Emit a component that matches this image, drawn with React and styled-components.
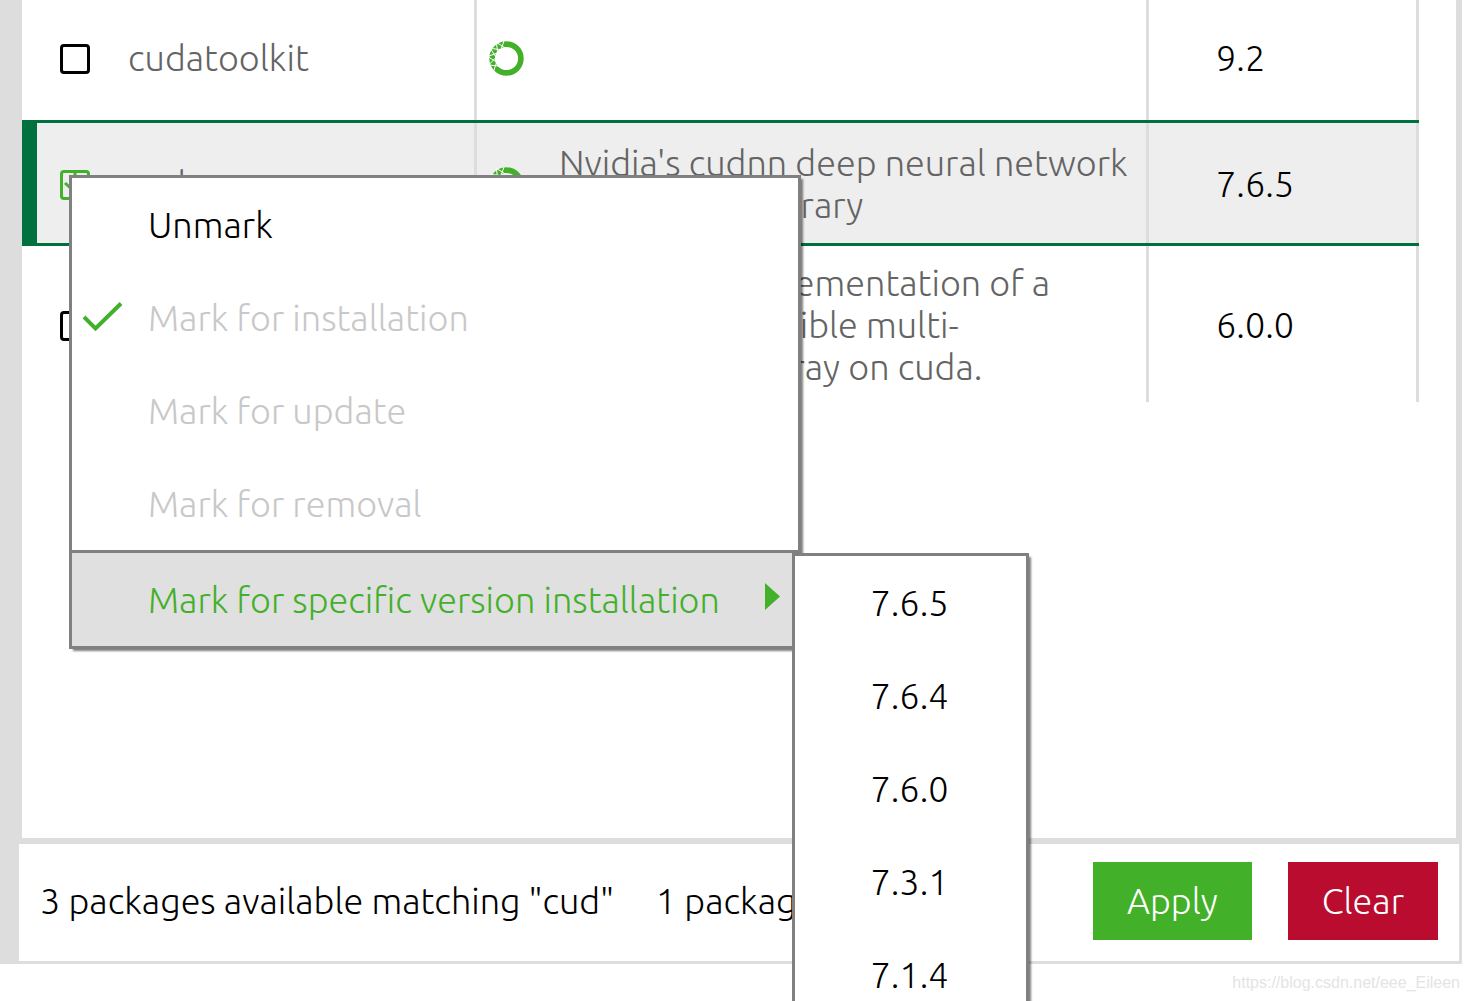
import React from "react";
import styled, { createGlobalStyle, css } from "styled-components";

const green = "#43b02a";
const darkGreen = "#00703f";
const line = "#dddddd";
const frame = "#808080";

const GlobalStyle = createGlobalStyle`
  * { box-sizing: border-box; }
  body {
    margin: 0;
    background: #ffffff;
    color: #000000;
    font-family: Ubuntu, "Open Sans", "Noto Sans", sans-serif;
    font-size: 36px;
    font-weight: 300;
    line-height: 42px;
  }
  button, input { font: inherit; margin: 0; }
`;

const Screen = styled.div`
  position: relative;
  height: 100vh;
  overflow: hidden;
  display: flex;
  flex-direction: column;
`;

const Window = styled.main`
  flex: 1;
  min-height: 0;
  margin-right: 6px;
  padding: 0 3px 3px 19px;
  background: ${line};
  display: flex;
  flex-direction: column;
  gap: 6px;
`;

const ListPane = styled.section`
  flex: 1;
  min-height: 0;
  overflow: hidden;
  margin: 0 3px;
  padding-right: 37px;
  background: #ffffff;
`;

const PackageTable = styled.table`
  width: 100%;
  margin-top: -6px;
  table-layout: fixed;
  border-collapse: separate;
  border-spacing: 0;
`;

const Col = styled.col`
  width: ${(p) => (p.$width ? `${p.$width}px` : "auto")};
`;

const Cell = styled.td`
  padding: ${(p) => (p.$icon ? "16px 0 12px" : "16px 0 14px")};
  padding-left: ${(p) => p.$indent || 0}px;
  color: ${(p) => (p.$strong ? "#000000" : "#646464")};
  white-space: nowrap;
  vertical-align: middle;
  box-shadow: ${(p) => (p.$ruled ? `inset -3px 0 ${line}` : "none")};
`;

const Row = styled.tr`
  height: 126px;
  & > td:first-child { border-left: 15px solid transparent; }
  ${(p) =>
    p.$selected &&
    css`
      background: #eeeeee;
      & > td {
        border-top: 3px solid ${darkGreen};
        border-bottom: 3px solid ${darkGreen};
      }
      & > td:first-child { border-left-color: ${darkGreen}; }
    `}
`;

const Tick = styled.label`
  position: relative;
  display: block;
  width: 30px;
  height: 30px;
  color: ${(p) => (p.$marked ? green : "#000000")};
  & input {
    appearance: none;
    display: block;
    width: 30px;
    height: 30px;
    border: 3px solid currentColor;
    border-radius: 4px;
    color: inherit;
  }
  & svg { position: absolute; inset: 0; pointer-events: none; }
`;

const RingIcon = styled.svg`
  display: block;
  width: 36px;
  height: 36px;
`;

const Footer = styled.footer`
  display: flex;
  align-items: center;
  gap: 36px;
  padding: 18px 21px 21px;
  background: #ffffff;
  white-space: nowrap;
`;

const Counts = styled.div`
  flex: 1;
  min-width: 0;
  display: flex;
  gap: 42px;
`;

const ActionButton = styled.button`
  height: 78px;
  padding: 0 34px;
  border: 0;
  color: #ffffff;
  background: ${(p) => (p.$danger ? "#ba0c2f" : green)};
`;

const Credit = styled.small`
  height: 37px;
  padding: 0 8px;
  text-align: right;
  font: 16px/37px "Liberation Sans", Arial, sans-serif;
  color: #e4e4e4;
`;

const Menu = styled.div`
  position: absolute;
  left: ${(p) => p.$left}px;
  top: ${(p) => p.$top}px;
  width: ${(p) => p.$width}px;
  border: 3px solid ${frame};
  background: #ffffff;
  box-shadow: 3px 3px 2px -1px rgba(0, 0, 0, 0.5);
`;

const MenuItem = styled.button`
  display: grid;
  grid-template-columns: 76px 1fr 33px;
  align-items: center;
  width: 100%;
  height: 93px;
  padding: 0;
  border: 0;
  background: transparent;
  color: #000000;
  text-align: left;
  white-space: nowrap;
  &:disabled { color: #c8c8c8; }
  ${(p) =>
    p.$open &&
    css`
      height: 96px;
      border-top: 3px solid ${frame};
      background: #e0e0e0;
      color: ${green};
    `}
`;

const MenuText = styled.span`
  grid-column: 2;
`;

const CheckIcon = styled.svg`
  width: 40px;
  height: 32px;
  margin-left: 11px;
`;

const ArrowIcon = styled.svg`
  width: 15px;
  height: 33px;
`;

const VersionItem = styled.button`
  display: block;
  width: 100%;
  height: 93px;
  padding: 1px 2px 0 0;
  border: 0;
  background: transparent;
  color: #000000;
  text-align: center;
`;

const ringPoint = (degrees, radius) => {
  const a = (degrees * Math.PI) / 180;
  return `${(17.5 + radius * Math.cos(a)).toFixed(2)} ${(17.5 + radius * Math.sin(a)).toFixed(2)}`;
};

/* Two opposed zigzags that cut the left side of the ring into small diamonds. */
const zigzag = (startOutside) =>
  "M" +
  [0, 1, 2, 3, 4, 5]
    .map((i) => ringPoint(264 - i * 26, (i % 2 === 0) === startOutside ? 19 : 10.5))
    .join("L");

function Ring() {
  return (
    <RingIcon viewBox="0 0 36 36" role="img" aria-label="Anaconda package">
      <circle cx="17.5" cy="17.5" r="14.4" fill="none" stroke={green} strokeWidth="5.6" />
      <path
        d={`${zigzag(true)}${zigzag(false)}`}
        fill="none"
        stroke="#ffffff"
        strokeWidth="1"
      />
    </RingIcon>
  );
}

const packages = [
  { id: "cudatoolkit", name: "cudatoolkit", lines: [], version: "9.2" },
  {
    id: "cudnn",
    name: "cudnn",
    lines: ["Nvidia's cudnn deep neural network", "acceleration library"],
    version: "7.6.5",
    marked: true,
  },
  {
    id: "cupy",
    name: "",
    lines: ["Cupy is an implementation of a", "numpy-compatible multi-", "dimensional array on cuda."],
    version: "6.0.0",
  },
];

const versions = ["7.6.5", "7.6.4", "7.6.0", "7.3.1", "7.1.4"];

function PackageRow({ item }) {
  const { id, name, lines, version, marked } = item;
  return (
    <Row $selected={marked}>
      <Cell $icon $indent={23}>
        <Tick $marked={marked}>
          <input type="checkbox" aria-label={id} defaultChecked={marked} />
          {marked && (
            <svg viewBox="0 0 30 30" fill="none" stroke="currentColor" strokeWidth="3">
              <path d="M15 2v18M5 13l10 9 10-9" />
            </svg>
          )}
        </Tick>
      </Cell>
      <Cell $indent={10} $ruled>{name}</Cell>
      <Cell $icon $indent={12}><Ring /></Cell>
      <Cell $indent={19} $ruled>
        {lines.map((text) => (
          <div key={text}>{text}</div>
        ))}
      </Cell>
      <Cell $indent={67} $ruled $strong>{version}</Cell>
    </Row>
  );
}

export default function App() {
  return (
    <Screen>
      <GlobalStyle />
      <Window>
        <ListPane>
          <PackageTable>
            <colgroup>
              <Col $width={96} />
              <Col $width={359} />
              <Col $width={63} />
              <Col />
              <Col $width={270} />
            </colgroup>
            <tbody>
              {packages.map((item) => (
                <PackageRow key={item.id} item={item} />
              ))}
            </tbody>
          </PackageTable>
        </ListPane>
        <Footer>
          <Counts>
            <span>3 packages available matching "cud"</span>
            <span>1 package</span>
          </Counts>
          <ActionButton type="button">Apply</ActionButton>
          <ActionButton type="button" $danger>Clear</ActionButton>
        </Footer>
      </Window>
      <Credit>https://blog.csdn.net/eee_Eileen</Credit>

      <Menu role="menu" $left={69} $top={175} $width={732}>
        <MenuItem type="button" role="menuitem"><MenuText>Unmark</MenuText></MenuItem>
        <MenuItem type="button" role="menuitem" disabled>
          <CheckIcon viewBox="0 0 40 32" fill="none" stroke={green} strokeWidth="4">
            <path d="M1 15L12.500 26.500 38 1.500" />
          </CheckIcon>
          <MenuText>Mark for installation</MenuText>
        </MenuItem>
        <MenuItem type="button" role="menuitem" disabled><MenuText>Mark for update</MenuText></MenuItem>
        <MenuItem type="button" role="menuitem" disabled><MenuText>Mark for removal</MenuText></MenuItem>
        <MenuItem type="button" role="menuitem" $open>
          <MenuText>Mark for specific version installation</MenuText>
          <ArrowIcon viewBox="0 0 15 33" fill={green}><path d="M0 0L15 13.500 0 27z" /></ArrowIcon>
        </MenuItem>
      </Menu>

      <Menu role="menu" $left={792} $top={553} $width={237}>
        {versions.map((v) => (
          <VersionItem key={v} type="button" role="menuitem">{v}</VersionItem>
        ))}
      </Menu>
    </Screen>
  );
}
